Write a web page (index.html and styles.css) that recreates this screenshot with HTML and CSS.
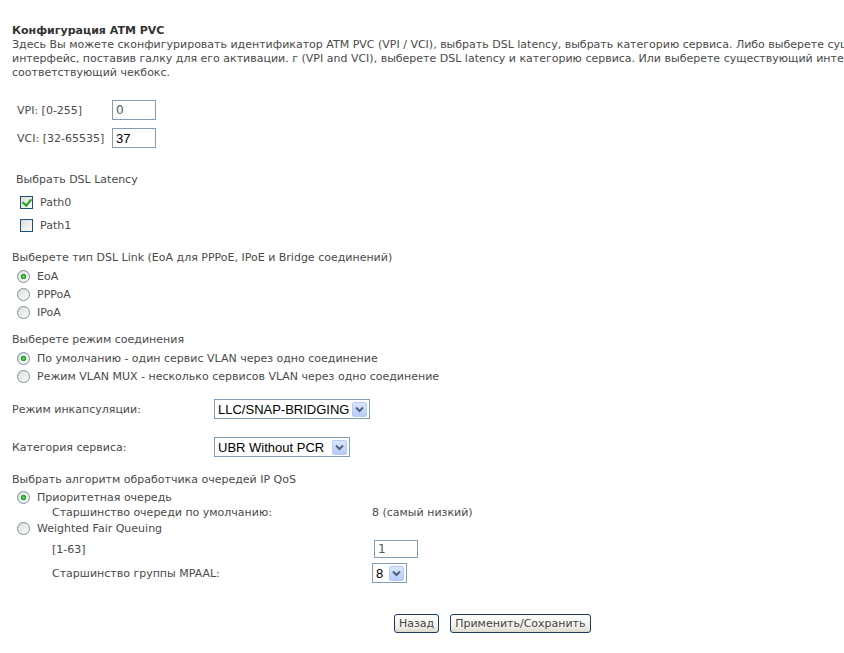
FILE: index.html
```html
<!DOCTYPE html>
<html lang="ru">
<head>
    <meta charset="UTF-8">
    <title>Конфигурация ATM PVC</title>
    <link rel="stylesheet" href="styles.css">
</head>
<body>
<form class="page">
    <!-- Заголовок и описание -->
    <div class="title">Конфигурация ATM PVC</div>
    <div class="desc">Здесь Вы можете сконфигурировать идентификатор ATM PVC (VPI / VCI), выбрать DSL latency, выбрать категорию сервиса. Либо выберете существующий<br>интерфейс, поставив галку для его активации. г (VPI and VCI), выберете DSL latency и категорию сервиса. Или выберете существующий интерфейс, поставив галку на<br>соответствующий чекбокс.</div>

    <!-- VPI / VCI -->
    <div class="pvc">
        <label>VPI: [0-255]</label><input class="text" type="text" value="0">
        <label>VCI: [32-65535]</label><input class="text dark" type="text" value="37">
    </div>

    <!-- DSL latency -->
    <div class="latency">
        <div class="latency-head">Выбрать DSL Latency</div>
        <label class="check-row"><input class="check" type="checkbox" checked>Path0</label>
        <label class="check-row"><input class="check" type="checkbox">Path1</label>
    </div>

    <!-- Тип DSL Link -->
    <div class="group link">
        <div class="group-head">Выберете тип DSL Link (EoA для PPPoE, IPoE и Bridge соединений)</div>
        <label class="radio-row"><input class="radio" type="radio" name="link" checked>EoA</label>
        <label class="radio-row"><input class="radio" type="radio" name="link">PPPoA</label>
        <label class="radio-row"><input class="radio" type="radio" name="link">IPoA</label>
    </div>

    <!-- Режим соединения -->
    <div class="group mode">
        <div class="group-head">Выберете режим соединения</div>
        <label class="radio-row"><input class="radio" type="radio" name="mode" checked>По умолчанию - один сервис VLAN через одно соединение</label>
        <label class="radio-row"><input class="radio" type="radio" name="mode">Режим VLAN MUX - несколько сервисов VLAN через одно соединение</label>
    </div>

    <!-- Инкапсуляция и категория -->
    <div class="field encap">
        <span>Режим инкапсуляции:</span>
        <span class="select w-encap"><select><option>LLC/SNAP-BRIDGING</option></select><span class="arrow"><svg width="9" height="7" viewBox="0 0 9 7"><path d="M1 1.5 L4.5 5 L8 1.5" fill="none" stroke="#4d6185" stroke-width="2"/></svg></span></span>
    </div>
    <div class="field category">
        <span>Категория сервиса:</span>
        <span class="select w-cat"><select><option>UBR Without PCR</option></select><span class="arrow"><svg width="9" height="7" viewBox="0 0 9 7"><path d="M1 1.5 L4.5 5 L8 1.5" fill="none" stroke="#4d6185" stroke-width="2"/></svg></span></span>
    </div>

    <!-- IP QoS -->
    <div class="group qos">
        <div class="group-head">Выбрать алгоритм обработчика очередей IP QoS</div>
        <label class="radio-row short"><input class="radio" type="radio" name="qos" checked>Приоритетная очередь</label>
        <div class="sub sub-text"><span>Старшинство очереди по умолчанию:</span><span>8 (самый низкий)</span></div>
        <label class="radio-row"><input class="radio" type="radio" name="qos">Weighted Fair Queuing</label>
        <div class="sub sub-input"><span>[1-63]</span><input class="text small" type="text" value="1"></div>
        <div class="sub sub-select"><span>Старшинство группы MPAAL:</span>
            <span class="select w-prio"><select><option>8</option></select><span class="arrow"><svg width="9" height="7" viewBox="0 0 9 7"><path d="M1 1.5 L4.5 5 L8 1.5" fill="none" stroke="#4d6185" stroke-width="2"/></svg></span></span>
        </div>
    </div>

    <!-- Кнопки -->
    <div class="buttons">
        <button class="btn" type="button">Назад</button>
        <button class="btn" type="button">Применить/Сохранить</button>
    </div>
</form>
</body>
</html>
```

FILE: styles.css
```css
* { box-sizing: border-box; }
html { overflow: hidden; }
body {
    margin: 0;
    background: #fff;
    color: #4a4a4a;
    font-family: "DejaVu Sans", Tahoma, sans-serif;
    font-size: 11px;
}

.page { padding: 24px 0 0 12px; width: 1200px; }

/* Заголовок */
.title { font-weight: bold; color: #333; line-height: 14px; }
.desc { line-height: 14px; white-space: nowrap; }

/* VPI / VCI */
.pvc {
    display: grid;
    grid-template-columns: 95px 44px;
    row-gap: 8px;
    align-items: center;
    margin: 20px 0 0 5px;
}
.text {
    width: 44px;
    height: 20px;
    border: 1px solid #7f9db9;
    padding: 0 3px;
    font: 12px "DejaVu Sans", Tahoma, sans-serif;
    color: #555;
    margin: 0;
}
.text.dark { font: 13px "Liberation Sans", Arial, sans-serif; color: #000; }
.text.small { height: 18px; margin-left: 2px; }

/* DSL latency */
.latency { margin: 25px 0 0 4px; }
.latency-head { line-height: 14px; }
.check-row {
    display: flex;
    align-items: center;
    height: 23px;
    padding-left: 4px;
}
.check-row:first-of-type { margin-top: 4px; }
.check {
    appearance: none;
    width: 13px;
    height: 13px;
    margin: 0 7px 0 0;
    border: 1px solid #1c5180;
    background: linear-gradient(135deg, #dcdcd7, #fbfbf9);
    position: relative;
}
.check:checked::after {
    content: "";
    position: absolute;
    left: 3px;
    top: 0px;
    width: 4px;
    height: 7px;
    border: solid #21a121;
    border-width: 0 2px 2px 0;
    transform: rotate(40deg);
}

/* Группы радиокнопок */
.group { margin-top: 14px; }
.group-head { line-height: 18px; }
.radio-row {
    display: flex;
    align-items: center;
    height: 18px;
    padding-left: 5px;
}
.radio-row.short { height: 16px; }
.radio {
    appearance: none;
    width: 13px;
    height: 13px;
    margin: 0 7px 0 0;
    border: 1px solid #7a8ea4;
    border-radius: 50%;
    background: linear-gradient(135deg, #dcdcd7, #fdfdfc);
}
.radio:checked {
    background: radial-gradient(circle, #5ed15e 0 1px, #21a121 1.5px 2.5px, transparent 3px),
                linear-gradient(135deg, #dcdcd7, #fdfdfc);
}
.link { margin-top: 12px; }
.mode { margin-top: 10px; }

/* Поля выбора */
.field {
    display: grid;
    grid-template-columns: 202px auto;
    align-items: center;
    justify-items: start;
}
.encap { margin-top: 14px; }
.category { margin-top: 18px; }
.select {
    display: inline-flex;
    align-items: center;
    height: 20px;
    border: 1px solid #7f9db9;
    background: #fff;
    padding-right: 2px;
}
.select select {
    appearance: none;
    border: none;
    background: transparent;
    font: 13px "Liberation Sans", Arial, sans-serif;
    color: #000;
    padding: 0 0 0 3px;
    height: 18px;
    flex: 1;
    min-width: 0;
    outline: none;
}
.arrow {
    display: flex;
    align-items: center;
    justify-content: center;
    flex: none;
    width: 15px;
    height: 15px;
    border: 1px solid #b7c9f3;
    border-radius: 2px;
    background: linear-gradient(#dbe6fe, #b6cbf7);
}
.w-encap { width: 156px; }
.w-cat { width: 136px; }
.w-prio { width: 35px; }

/* IP QoS */
.qos { margin-top: 14px; }
.sub {
    display: grid;
    grid-template-columns: 320px auto;
    align-items: center;
    justify-items: start;
    padding-left: 40px;
}
.sub-text { height: 14px; }
.sub-input { height: 18px; margin-top: 3px; }
.sub-select { height: 20px; margin-top: 5px; }

/* Кнопки */
.buttons {
    display: flex;
    gap: 11px;
    margin: 31px 0 0 382px;
}
.btn {
    height: 19px;
    padding: 0 4px;
    font: 11px "DejaVu Sans", Tahoma, sans-serif;
    color: #444;
    border: 1px solid #1c3d60;
    border-radius: 3px;
    background: linear-gradient(#fefefe, #f0efe8 70%, #dcd9cc);
}
```
